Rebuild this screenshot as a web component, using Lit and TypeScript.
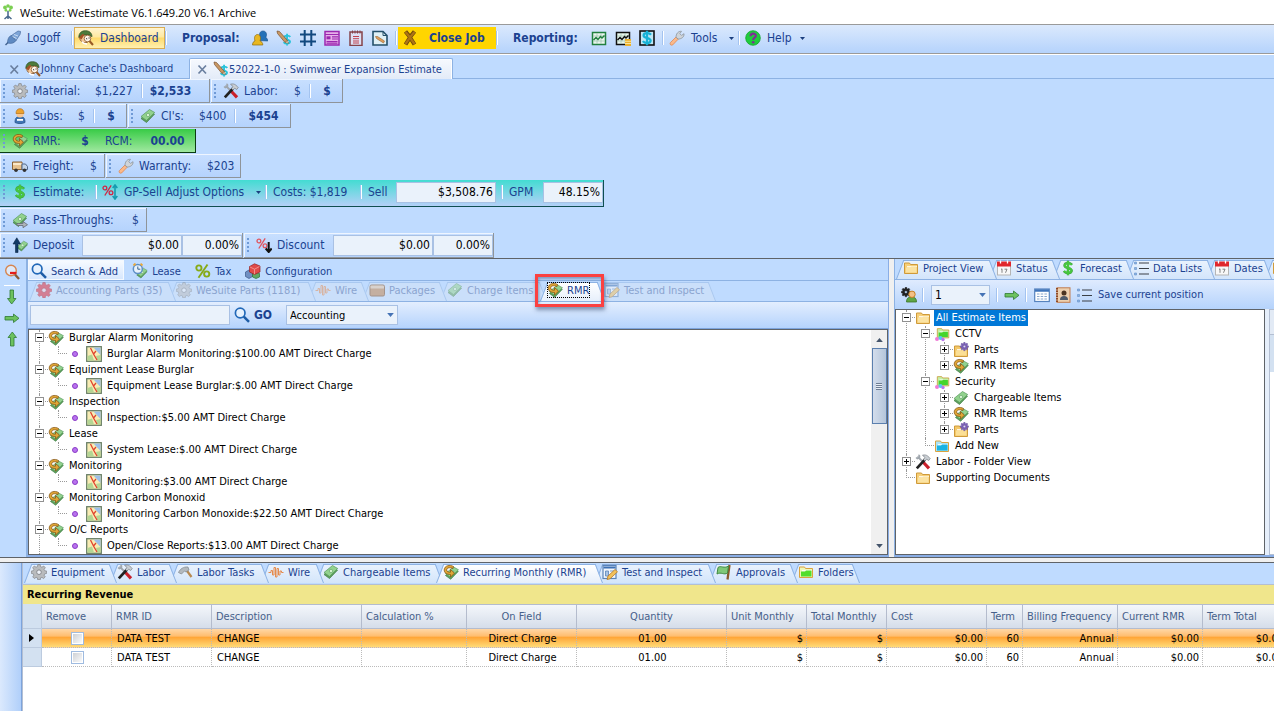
import { LitElement, html, css, svg, nothing } from "lit";
import type { SVGTemplateResult, TemplateResult } from "lit";
import { customElement, property } from "lit/decorators.js";
import { classMap } from "lit/directives/class-map.js";
import { styleMap } from "lit/directives/style-map.js";

const gearTeeth = (fill: string, stroke: string, hole: string) => svg`
  <g fill=${fill} stroke=${stroke} stroke-width=".6">
    <path d="M6.800 .6h2.400l.4 2 1.300.6 1.800-1.200 1.600 1.700-1.200 1.700.6 1.300 2 .4v2.300l-2 .4-.6 1.400 1.200 1.700-1.700 1.600-1.700-1.100-1.300.5-.4 2H6.800l-.4-2-1.300-.5-1.800 1.100-1.600-1.600 1.100-1.700-.5-1.400-2-.4V7.100l2-.4.5-1.300L1.700 3.700 3.300 2l1.800 1.200 1.300-.6z"/>
  </g><circle cx="8" cy="8.200" r="2.300" fill=${hole} stroke=${stroke} stroke-width=".8"/>`;

const bills = svg`
  <path d="M1 10.500 9.500 3l5 3.200L6.500 14.500z" fill="#5fa05c" stroke="#3f7f45" stroke-width=".7"/>
  <path d="M1 8.500 9.500 1.500l5.200 3L6.500 12.500z" fill="#92d28e" stroke="#55975a" stroke-width=".7"/>
  <circle cx="8" cy="7" r="1.700" fill="#d6f2d2" stroke="#5b9d60" stroke-width=".6"/>`;

const folder = (edge: string, body: string, back: string) => svg`
  <path d="M1.500 13.500V3h5l1 1.500h7v9z" fill=${back} stroke=${edge}/>
  <path d="M4 6.500h10M4 8h3l1-1.500" stroke="#fff" stroke-width=".8" fill="none"/>
  <path d="M3 12.500V7.500h4l1-1h5.500v6z" fill=${body}/>`;

const chart = (c: string) => svg`
  <rect x="1.500" y="2.500" width="13" height="12" fill="#eaf6ee" stroke=${c} stroke-width="1.500"/>
  <path d="M2 6h12M2 11h12M6 3v11M10 3v11" stroke="#9fc3ae" stroke-width=".7"/>
  <path d="m2.500 10 2.500-2.500 2 2 2.500-3 1.500 1.500 2.500-2.500" fill="none" stroke=${c} stroke-width="1.500"/>`;

const dollar = (c: string) => svg`
  <path d="M12 4.800C11 3.500 9.500 3.200 8 3.200c-2 0-3.400.8-3.400 2.300 0 3.400 7 1.600 7 5 0 1.600-1.600 2.500-3.600 2.500-1.800 0-3.200-.5-4.200-1.900M8 .8v14.400" fill="none" stroke=${c} stroke-width="2.300"/>`;

const percent = (c: string) => svg`
  <g fill="none" stroke=${c} stroke-width="1.300"><circle cx="2.900" cy="4" r="1.900"/><circle cx="9" cy="8.800" r="1.900"/><path d="M9.200 1.300 2.800 11.500"/></g>`;

const pencil = svg`<path d="m1 1 2.500.5 8 9-2.500 2L1.500 3.500z" fill="#c99863" stroke="#7a5230" stroke-width=".7"/><path d="m9 12.500 2.500-2 1 3z" fill="#f3dcb9" stroke="#7a5230" stroke-width=".5"/>`;

const wrench = svg`
  <path d="M1.300 12.700 7 7l2.200 2.200-5.500 5.700c-1.800.9-3.300-.6-2.400-2.200z" fill="#fbb98a" stroke="#dd8a58" stroke-width=".8"/>
  <path d="M7 7.300C7 4 9 1 12.500 1.300L10.800 3.700l1.700 1.700L15 3.700c.4 3.300-2.500 5.300-5.800 5.300z" fill="#cfd4d9" stroke="#8b949c" stroke-width=".8"/>`;

const arrowLoop = svg`
  <path d="M10.500 2.500C7 .3 1.200 1.500 1.200 6c0 3.200 2.800 4.500 6.300 4.500V13l4-3.800-4-3.700v2.700c-2 0-3.800-.5-3.800-2.200 0-2.300 3.300-2.900 6.300-1.400z" fill="#e0a536" stroke="#7d4d0c" stroke-width=".7"/>`;

const tileGear = (x: number, y: number) => svg`
  <g transform=${`translate(${x} ${y}) scale(.55)`}>${gearTeeth("#7b62b5", "#553f8e", "#ded6f2")}</g>`;

const calendar = svg`
  <rect x="1.500" y="2.500" width="13" height="12.500" fill="#f8f8f8" stroke="#b5b5b5"/>
  <path d="M1 1.500h14v5H1z" fill="#e0262c"/>
  <path d="M4.500 .5v3M11.500 .5v3" stroke="#fff" stroke-width="1.300"/>
  <path d="m5 9.500 1-.7v4M8.500 9.200h2.500l-1.500 3.600" fill="none" stroke="#777" stroke-width=".9"/>`;

const smallArrow = svg`<path d="M1 6.500h8.500V4l5.500 4.300L9.500 12.500V10H1z" fill="#6cc25f" stroke="#2f7a33" stroke-width=".8"/>`;

const ICONS: Record<string, SVGTemplateResult> = {
  logo: svg`<path d="M8 7v8M4.500 15 8 12l3.500 3" stroke="#46678c" stroke-width="1.500" fill="none"/><g fill="#7ccf52"><circle cx="5" cy="3.500" r="1.900"/><circle cx="8" cy="2" r="1.800"/><circle cx="11" cy="3.500" r="1.900"/><circle cx="6" cy="6.300" r="1.400"/><circle cx="10" cy="6.300" r="1.400"/></g><circle cx="8" cy="5" r="1" fill="#fff"/>`,
  plug: svg`<path d="m.5 15 3-3" stroke="#41628f" stroke-width="1.500"/><path d="M2.500 13C2.500 9 4 6 6.500 5.500l4.500 5c-1.500 2.500-4.500 3.500-8.500 2.500z" fill="#5f8ac2" stroke="#3f6396" stroke-width=".6"/><path d="M6.500 5.500 13 1l2.700.5-.7 3-4 6z" fill="#7ea5d8" stroke="#3f6396" stroke-width=".6"/><path d="m7.500 6.500 4 2M9 4.500l4 1.500" stroke="#d9e8f8" stroke-width=".8"/>`,
  dash: svg`<circle cx="7" cy="7.500" r="5.300" fill="#f4c796" stroke="#7a4a22" stroke-width=".8"/><path d="M.8 7.500C.8 2.500 4 .7 7.500.7s6.500 2 6.500 6l-3-2-6 .5z" fill="#4e7b3b" stroke="#2e4f22" stroke-width=".7"/><path d="M.8 7.500 4.500 4l2 .5-3 5z" fill="#a65326"/><circle cx="9.500" cy="8.500" r="3.300" fill="#fff6ea" stroke="#8a5a2d" stroke-width=".8"/><path d="m8 8.500 1.200.5M10.500 8h1.200" stroke="#333"/><path d="m11.500 11 3.500 4" stroke="#9a5b25" stroke-width="2"/><path d="M4 11.500c1 2 3 2.500 5 2.500" fill="none" stroke="#fff" stroke-width="1.500"/>`,
  people: svg`<path d="M6.500 10.500C6.500 8.500 8 8 8.500 7.500 6.500 4 8 1 11 1s4.500 3 2.800 6.500c.7.500 2 1 2 3.500z" fill="#2471b8" stroke="#1a5088" stroke-width=".6"/><path d="M.5 15c0-2.500 1-3.500 2.500-4C1.700 7.500 3 4.500 5.500 4.500S9.300 7.500 8 11c1.500.5 2.800 1.500 2.800 4z" fill="#e8b722" stroke="#8d6a10" stroke-width=".7"/>`,
  pencilDollar: svg`<g transform="translate(4.500 3) scale(.82)">${dollar("#27c4dc")}</g>${pencil}`,
  hash: svg`<path d="M4.700 0v16M11.300 0v16M0 4.500h16M0 11.500h16" stroke="#12497f" stroke-width="2"/>`,
  form: svg`<path d="M1 1.500h14v13.500H1z" fill="#e6b0ea" stroke="#9c27b0" stroke-width="1.500"/><path d="M1 4.500h14M8 6.800h6M8 9h6M2.500 11.500h11M2.500 13.200h11" stroke="#9c27b0" stroke-width="1.200"/><path d="M2.500 6.300h4v3h-4z" fill="#9c27b0"/>`,
  notepad: svg`<rect x="2" y="2" width="12" height="13.500" fill="#dde0f4" stroke="#85434a" stroke-width="1.500"/><path d="M4.500 .5v3M7 .5v3M9.500 .5v3M12 .5v3" stroke="#85434a"/><path d="M5 6.500h6M5 8.700h6M5 11h6M5 13h6" stroke="#c0434f"/>`,
  docPencil: svg`<path d="M1 1.500h10l4 4V15H1z" fill="#dff0f6" stroke="#24506b" stroke-width="1.600"/><path d="M11 1.500v4h4" fill="none" stroke="#24506b"/><path d="m3.500 6.500 2 0 7 4.500-1 2-7-4.500z" fill="#e2a05e" stroke="#94602d" stroke-width=".6"/>`,
  close: svg`<path d="M3.500 1.500 8 7l4.500-5.500M3.500 14.500 8 7.500l4.500 7" fill="none" stroke="#6f4a08" stroke-width="4"/><path d="M3.500 2 8 7.300 12.500 2M3.500 14 8 7.500l4.500 6.500" fill="none" stroke="#ad7416" stroke-width="2.300"/>`,
  x: svg`<path d="m4.500 4.500 7.500 8M12 4.500l-7.500 8" stroke="#6a7f9f" stroke-width="1.700"/>`,
  chartGreen: chart("#22803f"),
  chartBlack: svg`${chart("#111")}<path d="M10 9h6v7h-6z" fill="#eab02c"/><path d="M10 11.300h6M10 13.500h6" stroke="#fff1b8" stroke-width=".8"/>`,
  dollarBox: svg`<rect x="1" y="1" width="14" height="14" fill="#bfe7f5" stroke="#111" stroke-width="1.600"/>${dollar("#17b2d6")}`,
  wrench,
  help: svg`<circle cx="8" cy="8" r="7.300" fill="#20cc3d" stroke="#14a42e" stroke-width=".8"/><path d="M5.500 6.300c0-3.600 5.300-3.300 5.300-.5C10.800 7.800 8.200 7.500 8.200 10" fill="none" stroke="#7d2e95" stroke-width="2.200"/><circle cx="8.200" cy="12.300" r="1.300" fill="#7d2e95"/>`,
  gear: gearTeeth("#b9bbbd", "#77797c", "#eef2f8"),
  redGear: gearTeeth("#dc2030", "#b01020", "#f0d8e4"),
  tools: svg`<path d="M2.500 2.500 8 8" stroke="#9fa6ad" stroke-width="1.800"/><path d="M1 3.500 2.300 4.700 4.500 3.800 4.700 2 3.500.700" fill="none" stroke="#9fa6ad" stroke-width="1.300"/><path d="m8 8 6 6.300" stroke="#c9202b" stroke-width="3.200"/><path d="M10 5.500 1.800 14.300" stroke="#222" stroke-width="2.700"/><path d="M7.500 1.300c3-1 5 0 7.700 3.200l-1.500 2-2-1.300L10 7 8.500 5.500 10 3.500z" fill="#c9ced3" stroke="#777d84" stroke-width=".7"/>`,
  worker: svg`<path d="M3 14.500c0-4.500 1.500-6 5-6s5 1.500 5 6c-3 1.500-7 1.500-10 0z" fill="#3f75b4" stroke="#27528a" stroke-width=".8"/><circle cx="8" cy="6" r="3.600" fill="#f7c795"/><path d="M4 5.500C4 2.500 5.500.7 8 .7s4 1.800 4 4.800z" fill="#eda32f" stroke="#b8721a" stroke-width=".7"/><path d="M5 11h6v1.800H5z" fill="#fff"/>`,
  cash: bills,
  rmr: svg`<g transform="translate(1.500 1.500) scale(.95)">${bills}</g>${arrowLoop}`,
  truck: svg`<path d="M.5 4h9.500v7.500H.5z" fill="#e7c18d" stroke="#8a6236"/><path d="M1 5h8.500v2H1z" fill="#fbe8c8"/><path d="M10 6h3.500l2 2.500v3H10z" fill="#c3d5ea" stroke="#50698a"/><circle cx="4" cy="12.300" r="1.800" fill="#333"/><circle cx="12.500" cy="12.300" r="1.800" fill="#333"/>`,
  dollar: svg`${dollar("#237a2c")}<g transform="translate(.3 .3) scale(.96)" opacity=".75">${dollar("#54e046")}</g>`,
  percentUpDown: svg`${percent("#cf2746")}<path d="M13 1v14M10.700 4 13 1l2.300 3M10.700 12l2.300 3 2.300-3" fill="none" stroke="#159bb0" stroke-width="1.600"/>`,
  percentDown: svg`${percent("#e0555f")}<path d="M12.700 5v9.500M9.700 11.500l3 3.500 3-3.500" fill="none" stroke="#111" stroke-width="2"/>`,
  cashArrow: svg`${bills}<path d="M5 11.500h6V9.500l4.500 3.200-4.500 3V13.500H5z" fill="#aeb4ba" stroke="#646b73" stroke-width=".8"/>`,
  deposit: svg`<g transform="translate(4.500 3) scale(.76)">${bills}</g><path d="M3.500 15.500V7H1L4.800 .8 8.500 7H6v8.500z" fill="#123a66" stroke="#0b2748" stroke-width=".6"/>`,
  zoomOut: svg`<circle cx="7" cy="6.500" r="5.300" fill="#dfe9f8" stroke="#d6854f" stroke-width="1.400"/><path d="m11 10.500 4 4.500" stroke="#8a5a35" stroke-width="2.300"/><path d="M6 9h6.500" stroke="#e21b1b" stroke-width="2.300"/>`,
  right: smallArrow,
  down: svg`<g transform="rotate(90 8 8)">${smallArrow}</g>`,
  up: svg`<g transform="rotate(-90 8 8)">${smallArrow}</g>`,
  search: svg`<circle cx="6.200" cy="6" r="4.800" fill="#e6f1fd" stroke="#2168b8" stroke-width="1.700"/><path d="m9.800 9.600 5.200 5.200" stroke="#1d5ca6" stroke-width="2.500"/>`,
  lease: svg`<g transform="translate(4 4) scale(.76)">${bills}</g><circle cx="5.800" cy="6" r="4.500" fill="#e8f2fc" stroke="#5d8fc6" stroke-width="1.500"/><path d="M5.800 3.500V6.200h2.500" fill="none" stroke="#35618f"/><path d="m1.500 2.500 2-2M8.500.7l2 1.800" stroke="#eaa83a" stroke-width="1.800"/>`,
  tax: svg`<g fill="none" stroke="#86aa18" stroke-width="1.900"><circle cx="3.900" cy="5" r="2.600"/><circle cx="11.700" cy="11" r="2.600"/><path d="M12.500 1.500 3.500 14.800"/></g>`,
  cubes: svg`<path d="M.5 9 4 7l3.500 2v4.500L4 15.500.5 13.500z" fill="#6f8fc2" stroke="#3b5788" stroke-width=".7"/><path d="M7.500 10.500 11 9l3.500 1.500v3.500L11 15.500l-3.500-1.500z" fill="#5fa863" stroke="#2f6e36" stroke-width=".7"/><path d="M4.500 3.500 9.500 .8 15 3v6L9.500 11.500 4.500 9z" fill="#e04a49" stroke="#972224" stroke-width=".7"/><path d="m5 4 4.500 2.200L14.500 3.500M9.500 6.200v5" fill="none" stroke="#f6a19b" stroke-width=".8"/>`,
  wire: svg`<path d="M.5 8.500h2.500V6.500h1.500V11H6V3.500h1.500V13H9V4.500h1.500V11H12V7h1.500v1.500h2" fill="none" stroke="#e58a4c" stroke-width="1"/>`,
  box: svg`<rect x="1" y="3" width="14.500" height="11" rx="1.500" fill="#c08048" stroke="#7e4a1f"/><path d="M1.500 6.500V4.500q0-1 1.500-1h10.500q1.500 0 1.500 1v2z" fill="#e6c7a4"/>`,
  inspect: svg`<rect x="1" y="1.500" width="13" height="13" fill="#f1f6fc" stroke="#5b84b8" stroke-width="1.200"/><path d="M1.500 3.500h12" stroke="#3d71b4" stroke-width="2"/><path d="M3.500 7h3v5h-3zM8 7h4" fill="#a9c4e6" stroke="#5b84b8" stroke-width=".8"/><path d="m5 15.500 1-3.500 7-6.500 2.500 2.300-7.500 7z" fill="#f2c15b" stroke="#b57927" stroke-width=".8"/>`,
  folder: folder("#cf9a3a", "#fbe3a2", "#f6cf78"),
  folderGreen: folder("#d9a33e", "#52dd2c", "#eef7b8"),
  folderBlue: folder("#d9a33e", "#19b3e3", "#a9e2f5"),
  folderShare: svg`<g transform="translate(2 0) scale(.88)">${folder("#c9a347", "#45d52c", "#c4f0a4")}</g><circle cx="3" cy="13" r="2" fill="#f07ad6"/><circle cx="6.500" cy="12" r="2" fill="#58c8ef"/><circle cx="9" cy="13.500" r="1.700" fill="#b977ec"/>`,
  folderParts: svg`<g transform="translate(0 1)">${folder("#cf9a3a", "#fbdf95", "#f3c869")}</g>${tileGear(7, 0)}`,
  calendar,
  list: svg`<path d="M6 3h10M6 8.500h10M6 14h10" stroke="#3a3f46" stroke-width="1.100"/><path d="M1.500 2h2v2h-2zM1.500 7.500h2v2h-2zM1.500 13h2v2h-2z" fill="#8cb2e0" stroke="#6d98cf" stroke-width=".7"/>`,
  gearPerson: svg`<g transform="scale(.62)">${gearTeeth("#222", "#111", "#bfdbff")}</g><path d="M5.500 15c0-3.500 1.500-5 5-5s5 1.500 5 5z" fill="#5fa645" stroke="#3a7527" stroke-width=".8"/><circle cx="11" cy="7.300" r="3.200" fill="#f3c086" stroke="#c78124" stroke-width="1"/>`,
  table: svg`<rect x=".7" y="2" width="14.600" height="12.500" fill="#fff" stroke="#5683be" stroke-width="1.200"/><path d="M1 3.500h14" stroke="#3f74ba" stroke-width="2.500"/><path d="M3 7h10M3 9.500h10M3 12h10" stroke="#8aa7cc" stroke-width="1.200" stroke-dasharray="2.500 1.200"/>`,
  book: svg`<rect x="2" y=".8" width="13" height="14.500" fill="#ecd0b0" stroke="#c07c50"/><path d="M2 1v14" stroke="#8e4a25" stroke-width="2" stroke-dasharray="1.500 1"/><circle cx="9" cy="6" r="2.500" fill="#4b3422"/><path d="M5 13c0-3 1.500-4 4-4s4 1 4 4z" fill="#4f5b6b"/>`,
  hammer: svg`<path d="M9 5.500 14.500 13" stroke="#b98a50" stroke-width="2.200"/><path d="M1.500 8.500C3 5 6.500 2.500 11 3L12 6 9 8 7.500 7 4.500 10z" fill="#b3b9be" stroke="#80868c" stroke-width=".7"/>`,
  flag: svg`<path d="M13.500 1 11.500 15.500" stroke="#8a5a2a" stroke-width="2.300"/><path d="M2 3.500C5 1 8 5 12.500 2l-1 7C8 11.500 5 7.500 1 10z" fill="#7fc878" stroke="#3f8a41"/>`,
  map: svg`<rect x=".7" y=".7" width="14.600" height="14.600" fill="#f8ecb4" stroke="#6b8068" stroke-width="1.300"/><path d="M7.500 1.500H14.500V9z" fill="#9dbfe8"/><path d="M1.500 10 6 8.500l2 6H1.500zM10 10l4.500-1v5.500H11z" fill="#b4d694"/><path d="m4.500 2 3 6 3.500 6M7.500 8l2.500-3" fill="none" stroke="#e0432e" stroke-width="1.300"/>`,
};

const icon = (name: string) => html`<svg class="icon" viewBox="0 0 16 16" aria-hidden="true">${ICONS[name]}</svg>`;

const sep = html`<span class="sep"></span>`;
const caret = html`<svg class="caret" viewBox="0 0 5 3" aria-hidden="true"><path d="M0 0h5L2.500 3z" /></svg>`;

interface Tab {
  icon: string;
  label: string;
  width: number;
  active?: boolean;
}

const shared = css`
  * {
    box-sizing: border-box;
  }
  .icon {
    width: 16px;
    height: 16px;
    flex: none;
    display: block;
  }
  button,
  input,
  select {
    font: inherit;
    color: inherit;
    margin: 0;
    border-radius: 0;
  }
  button {
    border: 0;
    background: none;
    padding: 0;
    text-align: left;
    white-space: nowrap;
  }
`;

@customElement("slant-tabs")
class SlantTabs extends LitElement {
  @property({ attribute: false }) tabs: Tab[] = [];
  @property({ type: Boolean }) faded = false;

  static styles = [
    shared,
    css`
      :host {
        display: flex;
        height: 20px;
        overflow: hidden;
        padding: 1px 0 0 1px;
      }
      .tab {
        position: relative;
        isolation: isolate;
        flex: none;
        height: 19px;
        padding-left: 7px;
        color: #1b4290;
      }
      .tab::before,
      .tab::after {
        content: "";
        position: absolute;
        z-index: -1;
        top: 0;
        bottom: 0;
        width: calc(50% + 3px);
        background: linear-gradient(#e9f2fd, #d3e5fb);
        border-top: 1px solid #8db2e3;
      }
      .tab::before {
        left: 0;
        border-left: 1px solid #8db2e3;
        transform: skewX(-21deg);
        transform-origin: bottom;
      }
      .tab::after {
        right: -7px;
        border-right: 1px solid #8db2e3;
        transform: skewX(21deg);
        transform-origin: bottom;
      }
      .face {
        display: inline-flex;
        align-items: center;
        gap: 4px;
      }
      .faded:not(.active) {
        color: #8ba4cf;
      }
      .faded:not(.active) .icon {
        opacity: 0.5;
      }
      .faded:not(.active)::before,
      .faded:not(.active)::after {
        background: #cadffa;
        border-color: #a9c8f0;
      }
      .active::before,
      .active::after {
        background: linear-gradient(#fff, #e6effb);
      }
      .faded.active .face {
        outline: 1px dotted #000;
        outline-offset: -1px;
        padding-right: 1px;
      }
    `,
  ];

  render() {
    return this.tabs.map(
      (tab, i) => html`<button
        class=${classMap({ tab: true, faded: this.faded, active: !!tab.active })}
        style=${styleMap({ minWidth: `${tab.width}px`, zIndex: String(tab.active ? 50 : 40 - i) })}
      >
        <span class="face">${icon(tab.icon)}${tab.label}</span>
      </button>`,
    );
  }
}

interface Node {
  icon: string;
  label: string;
  open?: boolean;
  selected?: boolean;
  children?: Node[];
}

@customElement("item-tree")
class ItemTree extends LitElement {
  @property({ attribute: false }) nodes: Node[] = [];
  @property({ type: Boolean }) catalog = false;

  static styles = [
    shared,
    css`
      :host {
        display: block;
        overflow: hidden;
        color: #000;
        background: #fff;
      }
      ul {
        list-style: none;
        margin: 0;
        padding: 0;
      }
      li {
        position: relative;
      }
      ul ul {
        padding-left: 19px;
      }
      .row {
        display: flex;
        align-items: center;
        height: 16px;
        white-space: nowrap;
      }
      .joint {
        position: relative;
        flex: none;
        width: 19px;
        height: 16px;
      }
      .joint::before {
        content: "";
        position: absolute;
        left: 10px;
        right: 0;
        top: 7px;
        border-top: 1px dotted #999;
      }
      li::before {
        content: "";
        position: absolute;
        left: 10px;
        top: 0;
        bottom: 0;
        border-left: 1px dotted #999;
      }
      li:last-child::before {
        bottom: auto;
        height: 8px;
      }
      .toggle {
        position: absolute;
        left: 6px;
        top: 3px;
        width: 9px;
        height: 9px;
        background: #fff;
        border: 1px solid #919191;
      }
      .toggle::before,
      .toggle.plus::after {
        content: "";
        position: absolute;
        left: 1px;
        top: 3px;
        width: 5px;
        height: 1px;
        background: #000;
      }
      .toggle.plus::after {
        transform: rotate(90deg);
      }
      .label {
        margin-left: 3px;
        padding: 0 2px;
        line-height: 16px;
      }
      .selected {
        background: #0078d7;
        color: #fff;
      }
      .bullet {
        flex: none;
        width: 6px;
        height: 6px;
        margin: 0 8px 0 5px;
        border-radius: 50%;
        background: #b873ee;
        border: 1px solid #8b3cc8;
      }
      .catalog ul li::before {
        height: 8px;
      }
      .catalog > li:last-child::before {
        height: auto;
        bottom: 0;
      }
    `,
  ];

  private branch(nodes: Node[], depth: number): TemplateResult {
    return html`<ul class=${classMap({ catalog: this.catalog && depth === 0 })}>
      ${nodes.map(
        (n) => html`<li>
          <div class="row">
            <span class="joint"
              >${n.children
                ? html`<button class=${classMap({ toggle: true, plus: !n.open })} aria-label=${`Toggle ${n.label}`}></button>`
                : nothing}</span
            >${this.catalog && depth === 1 ? html`<span class="bullet"></span>` : nothing}${icon(n.icon)}<span
              class=${classMap({ label: true, selected: !!n.selected })}
              >${n.label}</span
            >
          </div>
          ${n.open && n.children ? this.branch(n.children, depth + 1) : nothing}
        </li>`,
      )}
    </ul>`;
  }

  render() {
    return this.branch(this.nodes, 0);
  }
}

const charge = (group: string, item: string): Node => ({
  icon: "rmr",
  label: group,
  open: true,
  children: [{ icon: "map", label: `${item} AMT Direct Charge` }],
});

const CATALOG: Node[] = [
  charge("Burglar Alarm Monitoring", "Burglar Alarm Monitoring:$100.00"),
  charge("Equipment Lease Burglar", "Equipment Lease Burglar:$.00"),
  charge("Inspection", "Inspection:$5.00"),
  charge("Lease", "System Lease:$.00"),
  charge("Monitoring", "Monitoring:$3.00"),
  charge("Monitoring Carbon Monoxid", "Monitoring Carbon Monoxide:$22.50"),
  charge("O/C Reports", "Open/Close Reports:$13.00"),
];

const PROJECT: Node[] = [
  {
    icon: "folder",
    label: "All Estimate Items",
    open: true,
    selected: true,
    children: [
      {
        icon: "folderShare",
        label: "CCTV",
        open: true,
        children: [
          { icon: "folderParts", label: "Parts", children: [] },
          { icon: "rmr", label: "RMR Items", children: [] },
        ],
      },
      {
        icon: "folderShare",
        label: "Security",
        open: true,
        children: [
          { icon: "cash", label: "Chargeable Items", children: [] },
          { icon: "rmr", label: "RMR Items", children: [] },
          { icon: "folderParts", label: "Parts", children: [] },
        ],
      },
      { icon: "folderBlue", label: "Add New" },
    ],
  },
  { icon: "tools", label: "Labor - Folder View", children: [] },
  { icon: "folder", label: "Supporting Documents" },
];

const CATALOG_TABS: Tab[] = [
  { icon: "redGear", label: "Accounting Parts (35)", width: 140 },
  { icon: "gear", label: "WeSuite Parts (1181)", width: 139 },
  { icon: "wire", label: "Wire", width: 54 },
  { icon: "box", label: "Packages", width: 78 },
  { icon: "cash", label: "Charge Items", width: 100 },
  { icon: "rmr", label: "RMR", width: 57, active: true },
  { icon: "inspect", label: "Test and Inspect", width: 112 },
];

const PROJECT_TABS: Tab[] = [
  { icon: "folder", label: "Project View", width: 93 },
  { icon: "calendar", label: "Status", width: 64 },
  { icon: "dollar", label: "Forecast", width: 73 },
  { icon: "list", label: "Data Lists", width: 81 },
  { icon: "calendar", label: "Dates", width: 58 },
  { icon: "folder", label: "", width: 60 },
];

const DETAIL_TABS: Tab[] = [
  { icon: "gear", label: "Equipment", width: 86 },
  { icon: "tools", label: "Labor", width: 60 },
  { icon: "hammer", label: "Labor Tasks", width: 91 },
  { icon: "wire", label: "Wire", width: 55 },
  { icon: "cash", label: "Chargeable Items", width: 120 },
  { icon: "rmr", label: "Recurring Monthly (RMR)", width: 159, active: true },
  { icon: "inspect", label: "Test and Inspect", width: 114 },
  { icon: "flag", label: "Approvals", width: 82 },
  { icon: "folderGreen", label: "Folders", width: 62 },
];

interface Column {
  head: string;
  width: number;
  align: "start" | "center" | "end";
  value: string;
  headCenter?: boolean;
}

const COLUMNS: Column[] = [
  { head: "RMR ID", width: 100, align: "start", value: "DATA TEST" },
  { head: "Description", width: 150, align: "start", value: "CHANGE" },
  { head: "Calculation %", width: 105, align: "start", value: "" },
  { head: "On Field", width: 110, align: "center", value: "Direct Charge", headCenter: true },
  { head: "Quantity", width: 150, align: "center", value: "01.00", headCenter: true },
  { head: "Unit Monthly", width: 80, align: "end", value: "$" },
  { head: "Total Monthly", width: 80, align: "end", value: "$" },
  { head: "Cost", width: 100, align: "end", value: "$0.00" },
  { head: "Term", width: 36, align: "end", value: "60" },
  { head: "Billing Frequency", width: 95, align: "end", value: "Annual" },
  { head: "Current RMR", width: 85, align: "end", value: "$0.00" },
  { head: "Term Total", width: 85, align: "end", value: "$0.00" },
];

@customElement("app-root")
class AppRoot extends LitElement {
  static styles = [
    shared,
    css`
      :host {
        display: flex;
        flex-direction: column;
        height: 100vh;
        overflow: hidden;
        background: #bfdbff;
        color: #1b4290;
        font-family: "DejaVu Sans Condensed", "Noto Sans", sans-serif;
        font-size: 11px;
      }
      .title {
        display: flex;
        align-items: center;
        gap: 4px;
        flex: none;
        height: 24px;
        background: #fff;
        color: #000;
        font: 11px "Open Sans", sans-serif;
      }
      .menu {
        display: flex;
        align-items: center;
        flex: none;
        height: 30px;
        padding-bottom: 2px;
        border-top: 1px solid #9a9a9a;
        border-bottom: 1px solid #9a9a9a;
        background: linear-gradient(#dbe9fd, #b5d3fc);
        font-size: 12px;
      }
      .item {
        display: flex;
        align-items: center;
        gap: 6px;
        height: 22px;
        padding: 0 4px;
        white-space: nowrap;
        flex: none;
      }
      .item .caret {
        margin-left: auto;
      }
      .w-logoff {
        min-width: 71px;
        padding-left: 5px;
      }
      .w-tools {
        min-width: 73px;
      }
      .w-help {
        min-width: 68px;
      }
      .w-proposal {
        min-width: 80px;
      }
      .w-reporting {
        min-width: 88px;
      }
      .dash {
        min-width: 91px;
        padding: 0 3px;
        border: 1px solid #d9ac52;
        background: linear-gradient(#fff4d0, #ffe9a0 45%, #ffdb6b 50%, #fff0b0);
      }
      .strong {
        font-weight: bold;
      }
      .section {
        padding: 0 0 0 14px;
      }
      .icons {
        display: flex;
        gap: 8px;
        padding: 0 7px 0 4px;
      }
      .closejob {
        min-width: 98px;
        gap: 11px;
        background: #ffd500;
        font-weight: bold;
      }
      .sep {
        flex: none;
        width: 3px;
        height: 14px;
        border-left: 1px solid #a3c3f0;
        background: linear-gradient(90deg, #fff 1px, transparent 1px);
      }
      .caret {
        width: 5px;
        height: 3px;
        flex: none;
        fill: #1b3f7e;
      }
      .docs {
        display: flex;
        flex: none;
        height: 25px;
        padding: 3px 0 0 1px;
        border-top: 1px solid #fff;
        border-bottom: 1px solid #8db2e3;
      }
      .doc {
        display: flex;
        align-items: center;
        min-width: 188px;
        height: 21px;
        padding: 0 8px 0 5px;
      }
      .doc .icon + .icon {
        margin-left: 3px;
      }
      .doc.current {
        min-width: 264px;
        height: 21px;
        padding-left: 4px;
        border: 1px solid #8db2e3;
        border-bottom: 0;
        border-radius: 2px 2px 0 0;
        background: linear-gradient(#f6f9fe, #e3ebf8);
        box-shadow: inset 1px 1px #fff, inset -1px 0 #fff;
      }
      .bars {
        display: flex;
        flex-direction: column;
        flex: none;
        gap: 1px;
        font-size: 12px;
      }
      .line {
        display: flex;
        gap: 1px;
      }
      .bar {
        display: flex;
        align-items: center;
        height: 24px;
        padding-left: 3px;
        border-right: 1px solid #8f9499;
        border-bottom: 1px solid #8f9499;
        box-shadow: inset 1px 1px #eef5ff;
        background: linear-gradient(#c8dfff, #b5d3fd);
        white-space: nowrap;
      }
      .bar.green {
        background: linear-gradient(#38cb46, #a0e8a0);
        border-color: #0b3d12;
        box-shadow: none;
      }
      .bar.teal {
        height: 27px;
        margin-top: 1px;
        padding-bottom: 2px;
        background: linear-gradient(#43dcd2, #b4d0f8);
        border-color: #0f4f50;
        box-shadow: none;
      }
      .bar.tall {
        height: 25px;
      }
      .grip {
        flex: none;
        width: 2px;
        height: 14px;
        margin-right: 7px;
        background: repeating-linear-gradient(#6f9ad6 0 2px, transparent 2px 4px);
      }
      .cell {
        padding-left: 5px;
        flex: none;
      }
      .total {
        padding: 0;
        text-align: center;
      }
      .w-adjust {
        min-width: 167px;
      }
      .entry {
        height: 21px;
        border: 1px solid #a9c1e4;
        background: #eaf2fb;
        color: #000;
        text-align: right;
        padding: 1px 2px;
        outline: 0;
      }
      .work {
        display: grid;
        grid-template-columns: 27px minmax(0, 862fr) 5px minmax(0, 380fr);
        flex: none;
        height: 300px;
        border-top: 1px solid #5f6368;
        border-bottom: 1px solid #5f6368;
      }
      .rail {
        display: flex;
        flex-direction: column;
        align-items: center;
        gap: 5px;
        padding: 5px 2px 0 0;
        border-right: 1px solid #8db2e3;
      }
      .rail hr {
        width: 16px;
        margin: 0 0 -2px;
        border: 0;
        border-top: 1px solid #fff;
      }
      .split {
        background: #f0f0f0;
      }
      .panel {
        display: flex;
        flex-direction: column;
        min-width: 0;
        border-left: 1px solid #8db2e3;
        border-bottom: 2px solid #8aaee6;
      }
      .modes {
        display: flex;
        flex: none;
        height: 22px;
        padding-top: 1px;
        border-bottom: 1px solid #8db2e3;
      }
      .mode {
        display: flex;
        align-items: center;
        gap: 4px;
        padding: 2px 5px 0 2px;
      }
      .mode.on {
        min-width: 96px;
        border: 1px solid #f4f9ff;
        background: linear-gradient(#f6faff, #d7e7fd);
      }
      .w-lease {
        min-width: 63px;
        margin-left: 6px;
      }
      .w-tax {
        min-width: 50px;
      }
      .find {
        display: flex;
        align-items: center;
        flex: none;
        height: 28px;
        padding-left: 2px;
        border-top: 1px solid #8db2e3;
        border-bottom: 1px solid #7da4dc;
        background: linear-gradient(#e3eefe, #b5d3fc);
      }
      .query {
        width: 200px;
        height: 20px;
        border: 1px solid #a9c1e4;
        background: #eaf2fb;
        outline: 0;
      }
      .go {
        display: flex;
        align-items: center;
        gap: 4px;
        min-width: 56px;
        padding-left: 4px;
        font-weight: bold;
        font-size: 12px;
      }
      .pick {
        appearance: none;
        height: 20px;
        padding: 0 16px 0 3px;
        border: 1px solid #a9c1e4;
        color: #000;
        background: #eaf2fb;
      }
      .picker {
        position: relative;
        display: flex;
      }
      .picker .caret {
        position: absolute;
        right: 4px;
        top: 8px;
        width: 7px;
        height: 4px;
        fill: #4573b5;
        pointer-events: none;
      }
      .w-category .pick {
        width: 112px;
      }
      .w-version .pick {
        width: 59px;
        font-size: 12px;
      }
      .pane {
        display: flex;
        flex: 1;
        min-height: 0;
        min-width: 0;
        border: 1px solid #5f6368;
        background: #fff;
      }
      .pane item-tree {
        flex: 1;
      }
      .left {
        border-right: 1px solid #8aaee6;
      }
      .scroll {
        display: flex;
        flex-direction: column;
        align-items: center;
        width: 16px;
        background: #f0f0f0;
        padding: 8px 0 6px;
      }
      .scroll .caret {
        width: 7px;
        height: 4px;
        fill: #44546a;
      }
      .scroll .flip {
        transform: rotate(180deg);
      }
      .thumb {
        width: 15px;
        height: 76px;
        margin: 6px 0 auto;
        display: flex;
        align-items: center;
        justify-content: center;
        border: 1px solid #5b7fae;
        background: linear-gradient(90deg, #d3ddec, #b4c5da);
      }
      .thumb i {
        width: 6px;
        height: 7px;
        background: repeating-linear-gradient(#6e7e94 0 1px, #e8eef6 1px 2px);
      }
      .side {
        overflow: hidden;
      }
      .tools {
        display: flex;
        align-items: center;
        flex: none;
        height: 30px;
        padding-left: 6px;
        border-top: 1px solid #8db2e3;
        background: linear-gradient(#dfebfe, #b5d3fc);
      }
      .tools .item {
        padding: 0 5px;
      }
      .views {
        display: flex;
        flex: 1;
        gap: 4px;
        min-height: 0;
        background: #e6effb;
      }
      .extra {
        flex: none;
        width: 5px;
        border: 1px solid #b4bfd2;
        border-right: 0;
        background: linear-gradient(#e2eaf5 24px, #b4bfd2 24px 25px, #d3e1f1 25px 62px, #fff 62px);
      }
      .callout {
        position: absolute;
        left: 535px;
        top: 274px;
        width: 69px;
        height: 33px;
        z-index: 60;
        border: 3px solid #fb4141;
        box-shadow: 1px 3px 4px rgba(40, 60, 100, 0.5), inset 1px 2px 3px rgba(40, 60, 100, 0.4);
        pointer-events: none;
      }
      .gutter {
        flex: none;
        height: 4px;
        background: #f0f0f0;
      }
      .detail {
        display: grid;
        grid-template-columns: 22px minmax(0, 1fr);
        flex: 1;
        min-height: 0;
        border-top: 1px solid #5f6368;
      }
      .strip {
        background: linear-gradient(90deg, #dbe9fd, #b0cffa);
        border-right: 1px solid #7da4dc;
      }
      .grid {
        overflow: hidden;
        background: #fff;
        border-left: 1px solid #b4bfd2;
      }
      .grid slant-tabs {
        height: 21px;
        background: #bfdbff;
      }
      h2 {
        margin: 0;
        height: 20px;
        padding-left: 4px;
        border-top: 1px solid #b4bfd2;
        background: #f0e68c;
        color: #000;
        font: bold 11px/19px "DejaVu Sans Condensed", "Noto Sans", sans-serif;
      }
      table {
        table-layout: fixed;
        width: 1265px;
        border-collapse: separate;
        border-spacing: 0;
      }
      th {
        height: 25px;
        padding: 0 4px;
        text-align: start;
        font-weight: normal;
        color: #46608a;
        border: solid #b4bccd;
        border-width: 1px 1px 1px 0;
        background: linear-gradient(#f4f7fb, #d5dde9);
        white-space: nowrap;
      }
      td {
        height: 19px;
        padding: 0 3px 0 5px;
        color: #000;
        border: dotted #bbb;
        border-width: 0 1px 1px 0;
        white-space: nowrap;
      }
      .mark {
        padding: 0 0 0 6px;
        background: #d3e1f1;
        border: solid #bccbdf;
        border-width: 0 1px 1px 0;
      }
      .mark svg {
        display: block;
      }
      .center {
        text-align: center;
      }
      .end {
        text-align: end;
      }
      .hot td:not(.mark) {
        background: linear-gradient(#ffd7a6, #ffbd6e 40%, #ffa435 45%, #ffdb78);
      }
      .tick {
        appearance: none;
        display: block;
        width: 13px;
        height: 13px;
        margin: auto;
        border: 1px solid #9fbbe0;
        background: linear-gradient(135deg, #c9ccd1, #fff);
        box-shadow: inset 0 0 0 1px #fff;
      }
    `,
  ];

  private cell(text: string, width: number, total = false) {
    return html`<span class=${classMap({ cell: true, strong: total, total })} style=${styleMap({ minWidth: `${width}px` })}>${text}</span>`;
  }

  private entry(label: string, value: string, width: number) {
    return html`<input class="entry" aria-label=${label} .value=${value} style=${styleMap({ width: `${width}px` })} />`;
  }

  private picker(label: string, value: string, cls: string) {
    return html`<span class="picker ${cls}"
      ><select class="pick" aria-label=${label}>
        <option>${value}</option></select
      >${caret}</span
    >`;
  }

  render() {
    const grip = html`<span class="grip"></span>`;
    return html`
      <header class="title">${icon("logo")}<span>WeSuite: WeEstimate V6.1.649.20 V6.1 Archive</span></header>

      <nav class="menu">
        <button class="item w-logoff">${icon("plug")}Logoff</button>${sep}
        <button class="item dash">${icon("dash")}Dashboard</button>${sep}
        <span class="item section strong w-proposal">Proposal:</span>
        <span class="icons"
          >${["people", "pencilDollar", "hash", "form", "notepad", "docPencil"].map(
            (n) => html`<button aria-label=${n}>${icon(n)}</button>`,
          )}</span
        >${sep}
        <button class="item closejob">${icon("close")}Close Job</button>${sep}
        <span class="item section strong w-reporting">Reporting:</span>
        <span class="icons"
          >${["chartGreen", "chartBlack", "dollarBox"].map((n) => html`<button aria-label=${n}>${icon(n)}</button>`)}</span
        >${sep}
        <button class="item w-tools">${icon("wrench")}Tools${caret}</button>${sep}
        <button class="item w-help">${icon("help")}Help${caret}</button>
      </nav>

      <nav class="docs">
        <button class="doc">${icon("x")}${icon("dash")}Johnny Cache's Dashboard</button>
        <button class="doc current">${icon("x")}${icon("pencilDollar")}52022-1-0 : Swimwear Expansion Estimate</button>
      </nav>

      <section class="bars">
        <div class="line">
          <div class="bar">${grip}${icon("gear")}${this.cell("Material:", 62)}${this.cell("$1,227", 51)}${sep}${this.cell("$2,533", 53, true)}${this.cell("", 12)}</div>
          <div class="bar">${grip}${icon("tools")}${this.cell("Labor:", 50)}${this.cell("$", 20)}${sep}${this.cell("$", 30, true)}</div>
        </div>
        <div class="line">
          <div class="bar">${grip}${icon("worker")}${this.cell("Subs:", 45)}${this.cell("$", 20)}${sep}${this.cell("$", 30, true)}</div>
          <div class="bar">${grip}${icon("cash")}${this.cell("CI's:", 38)}${this.cell("$400", 40)}${sep}${this.cell("$454", 53, true)}</div>
        </div>
        <div class="line">
          <div class="bar green">${grip}${icon("rmr")}${this.cell("RMR:", 42)}${this.cell("$", 30, true)}${this.cell("RCM:", 40)}${this.cell("00.00", 55, true)}</div>
        </div>
        <div class="line">
          <div class="bar">${grip}${icon("truck")}${this.cell("Freight:", 57)}${this.cell("$", 19)}</div>
          <div class="bar">${grip}${icon("wrench")}${this.cell("Warranty:", 68)}${this.cell("$203", 38)}</div>
        </div>
        <div class="line">
          <div class="bar teal">
            ${grip}${icon("dollar")}${this.cell("Estimate:", 67)}${sep}<button class="item w-adjust">
              ${icon("percentUpDown")}GP-Sell Adjust Options${caret}</button
            >${sep}${this.cell("Costs: $1,819", 92)}${sep}${this.cell("Sell", 33)}${this.entry("Sell", "$3,508.76", 100)}${this.cell("", 2)}${sep}${this.cell("GPM", 39)}${this.entry("GPM", "48.15%", 60)}
          </div>
        </div>
        <div class="line">
          <div class="bar">${grip}${icon("cashArrow")}${this.cell("Pass-Throughs:", 99)}${this.cell("$", 19)}</div>
        </div>
        <div class="line">
          <div class="bar tall">${grip}${icon("deposit")}${this.cell("Deposit", 54)}${this.entry("Deposit amount", "$0.00", 100)}${this.entry("Deposit percent", "0.00%", 60)}</div>
          <div class="bar tall">${grip}${icon("percentDown")}${this.cell("Discount", 61)}${this.entry("Discount amount", "$0.00", 100)}${this.entry("Discount percent", "0.00%", 60)}</div>
        </div>
      </section>

      <main class="work">
        <div class="rail">
          <button aria-label="Zoom out">${icon("zoomOut")}</button>
          <hr />
          <button aria-label="Move down">${icon("down")}</button>
          <button aria-label="Move right">${icon("right")}</button>
          <button aria-label="Move up">${icon("up")}</button>
        </div>
        <section class="panel left">
          <nav class="modes">
            <button class="mode on">${icon("search")}Search &amp; Add</button>
            <button class="mode w-lease">${icon("lease")}Lease</button>
            <button class="mode w-tax">${icon("tax")}Tax</button>
            <button class="mode">${icon("cubes")}Configuration</button>
          </nav>
          <slant-tabs faded .tabs=${CATALOG_TABS}></slant-tabs>
          <div class="find">
            <input class="query" aria-label="Search text" />
            <button class="go">${icon("search")}GO</button>
            ${this.picker("Category", "Accounting", "w-category")}
          </div>
          <div class="pane">
            <item-tree catalog .nodes=${CATALOG}></item-tree>
            <div class="scroll">
              <svg class="caret flip" viewBox="0 0 5 3"><path d="M0 0h5L2.500 3z" /></svg>
              <div class="thumb"><i></i></div>
              <svg class="caret" viewBox="0 0 5 3"><path d="M0 0h5L2.500 3z" /></svg>
            </div>
          </div>
        </section>
        <div class="split"></div>
        <section class="panel side">
          <slant-tabs .tabs=${PROJECT_TABS}></slant-tabs>
          <div class="tools">
            <button aria-label="Configure users">${icon("gearPerson")}</button>
            <span class="item">${sep}${this.picker("Version", "1", "w-version")}${sep}</span>
            <button aria-label="Go">${icon("right")}</button>
            <span class="item">${sep}<button aria-label="Table">${icon("table")}</button></span>
            <button aria-label="Contacts">${icon("book")}</button>
            <button class="item">${icon("list")}Save current position</button>
          </div>
          <div class="views">
            <div class="pane"><item-tree .nodes=${PROJECT}></item-tree></div>
            <aside class="extra"></aside>
          </div>
        </section>
      </main>
      <div class="callout"></div>
      <div class="gutter"></div>

      <section class="detail">
        <div class="strip"></div>
        <div class="grid">
          <slant-tabs .tabs=${DETAIL_TABS}></slant-tabs>
          <h2>Recurring Revenue</h2>
          <table>
            <colgroup>
              <col width="19" />
              <col width="70" />
              ${COLUMNS.map((c) => html`<col width=${c.width} />`)}
            </colgroup>
            <thead>
              <tr>
                <th class="mark"></th>
                <th>Remove</th>
                ${COLUMNS.map((c) => html`<th class=${c.headCenter ? "center" : ""}>${c.head}</th>`)}
              </tr>
            </thead>
            <tbody>
              ${[true, false].map(
                (hot) => html`<tr class=${hot ? "hot" : ""}>
                  <td class="mark">
                    ${hot ? html`<svg width="6" height="8" viewBox="0 0 6 8"><path d="M0 0 5 4 0 8z" /></svg>` : nothing}
                  </td>
                  <td><input class="tick" type="checkbox" aria-label="Remove" /></td>
                  ${COLUMNS.map((c) => html`<td class=${c.align}>${c.value}</td>`)}
                </tr>`,
              )}
            </tbody>
          </table>
        </div>
      </section>
    `;
  }
}
